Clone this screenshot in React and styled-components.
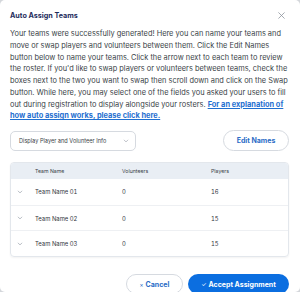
import React from "react";
import styled, { createGlobalStyle } from "styled-components";

const GlobalStyle = createGlobalStyle`
  html, body {
    margin: 0;
    padding: 0;
    background: #d4d7db;
  }
  body {
    font-family: Inter, "Noto Sans", sans-serif;
    -webkit-font-smoothing: antialiased;
  }
`;

const teams = [
  { name: "Team Name 01", volunteers: "0", players: "16" },
  { name: "Team Name 02", volunteers: "0", players: "15" },
  { name: "Team Name 03", volunteers: "0", players: "15" },
];

function Chevron({ size = 6, color = "#9aa1ab" }) {
  return (
    <svg width={size} height={size} viewBox="0 0 10 10" fill="none">
      <path d="M2 3.5 L5 6.5 L8 3.5" stroke={color} strokeWidth="1.2" strokeLinecap="round" strokeLinejoin="round" />
    </svg>
  );
}

function App() {
  return (
    <>
      <GlobalStyle />
      <Modal>
        <Header>
          <Title>Auto Assign Teams</Title>
          <CloseButton aria-label="close">
            <svg width="7" height="7" viewBox="0 0 10 10">
              <path d="M1 1 L9 9 M9 1 L1 9" stroke="#8a9099" strokeWidth="1.1" strokeLinecap="round" />
            </svg>
          </CloseButton>
        </Header>
        <Intro>
          Your teams were successfully generated! Here you can name your teams and move or swap players and
          volunteers between them. Click the Edit Names button below to name your teams. Click the arrow next to
          each team to review the roster. If you'd like to swap players or volunteers between teams, check the
          boxes next to the two you want to swap then scroll down and click on the Swap button. While here, you
          may select one of the fields you asked your users to fill out during registration to display alongside
          your rosters. <Link href="#">For an explanation of how auto assign works, please click here.</Link>
        </Intro>
        <Controls>
          <Select>
            <span>Display Player and Volunteer Info</span>
            <Chevron size={6} color="#a3a9b1" />
          </Select>
          <OutlineButton>Edit Names</OutlineButton>
        </Controls>
        <Table>
          <HeadRow>
            <span />
            <span>Team Name</span>
            <span>Volunteers</span>
            <span>Players</span>
          </HeadRow>
          {teams.map((team) => (
            <Row key={team.name}>
              <ChevronCell>
                <Chevron size={6} />
              </ChevronCell>
              <Cell>{team.name}</Cell>
              <Cell>{team.volunteers}</Cell>
              <Cell>{team.players}</Cell>
            </Row>
          ))}
        </Table>
        <Footer>
          <CancelButton>
            <Glyph>×</Glyph> Cancel
          </CancelButton>
          <AcceptButton>
            <Glyph>✓</Glyph> Accept Assignment
          </AcceptButton>
        </Footer>
      </Modal>
    </>
  );
}

const Modal = styled.div`
  width: 300px;
  height: 292px;
  box-sizing: border-box;
  padding: 0 11px 0 10px;
  background: #fff;
  border-radius: 5px;
  overflow: hidden;
`;

const Header = styled.div`
  height: 28px;
  display: flex;
  align-items: center;
  justify-content: space-between;
  padding-top: 2px;
  box-sizing: border-box;
`;

const Title = styled.h2`
  margin: 0;
  font-size: 7.2px;
  font-weight: 700;
  color: #1d2c5c;
`;

const CloseButton = styled.button`
  border: none;
  background: none;
  padding: 0;
  margin-right: 4px;
  display: flex;
  cursor: pointer;
`;

const Intro = styled.p`
  margin: 0;
  font-size: 7.42px;
  line-height: 11.75px;
  color: #3a3f47;
`;

const Link = styled.a`
  color: #1f6fd0;
  font-weight: 700;
  text-decoration: underline;
`;

const Controls = styled.div`
  margin-top: 8px;
  display: flex;
  align-items: center;
  justify-content: space-between;
`;

const Select = styled.div`
  width: 126px;
  height: 20px;
  box-sizing: border-box;
  border: 1px solid #d6dae0;
  border-radius: 5px;
  padding: 0 6px 0 8px;
  display: flex;
  align-items: center;
  justify-content: space-between;
  font-size: 5.6px;
  color: #3a3f47;
`;

const OutlineButton = styled.button`
  width: 66px;
  height: 21px;
  border: 1px solid #d6dae0;
  border-radius: 11px;
  background: #fff;
  color: #2a6bc6;
  font-family: inherit;
  font-size: 7px;
  font-weight: 700;
  padding: 0;
  cursor: pointer;
`;

const Table = styled.div`
  margin-top: 11px;
  border: 1px solid #e3e7ec;
  border-radius: 4px;
  overflow: hidden;
  box-shadow: 0 1px 2px rgba(0, 0, 0, 0.05);
`;

const cols = "24px 87px 89px 1fr";

const HeadRow = styled.div`
  display: grid;
  grid-template-columns: ${cols};
  align-items: center;
  height: 16px;
  background: #e9eef4;
  font-size: 5.2px;
  color: #3a3f47;
`;

const Row = styled.div`
  display: grid;
  grid-template-columns: ${cols};
  align-items: center;
  box-sizing: border-box;
  height: 25.7px;
  font-size: 5.9px;
  color: #2f343b;
  & + & {
    border-top: 1px solid #eef0f3;
  }
`;

const Cell = styled.span`
  color: #2f343b;
  font-variant-numeric: tabular-nums;
`;

const ChevronCell = styled.span`
  display: flex;
  padding-left: 6px;
`;

const Footer = styled.div`
  margin-top: 17px;
  display: flex;
  justify-content: flex-end;
  gap: 5px;
`;

const BaseButton = styled.button`
  height: 20px;
  border-radius: 10px;
  font-family: inherit;
  font-size: 7px;
  font-weight: 700;
  padding: 0;
  cursor: pointer;
  display: flex;
  align-items: center;
  justify-content: center;
  gap: 2px;
`;

const CancelButton = styled(BaseButton)`
  width: 57px;
  border: 1px solid #d6dae0;
  background: #fff;
  color: #2a6bc6;
`;

const AcceptButton = styled(BaseButton)`
  width: 101px;
  border: none;
  background: #0b6ee0;
  color: #fff;
`;

const Glyph = styled.span`
  font-weight: 400;
  font-size: 6px;
`;

export default App;
